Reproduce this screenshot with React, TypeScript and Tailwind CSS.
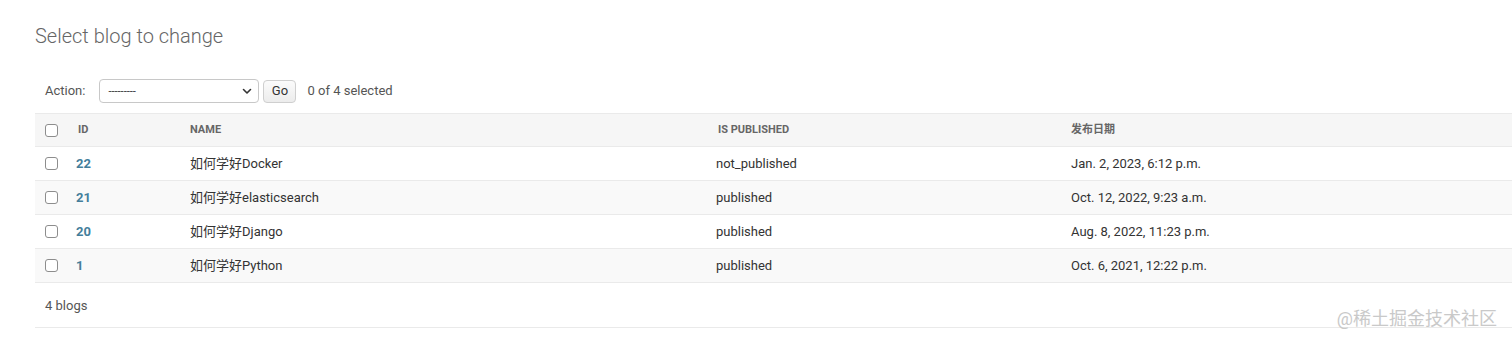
import React from 'react';

const rows = [
  { id: 22, name: '如何学好Docker', published: 'not_published', date: 'Jan. 2, 2023, 6:12 p.m.' },
  { id: 21, name: '如何学好elasticsearch', published: 'published', date: 'Oct. 12, 2022, 9:23 a.m.' },
  { id: 20, name: '如何学好Django', published: 'published', date: 'Aug. 8, 2022, 11:23 p.m.' },
  { id: 1, name: '如何学好Python', published: 'published', date: 'Oct. 6, 2021, 12:22 p.m.' },
];

const Checkbox = () => (
  <div className="w-[13px] h-[13px] rounded-[3px] border border-[#8d8d8d] bg-white" />
);

const cols = 'grid grid-cols-[33px_112px_526px_355px_1fr] items-center';

const App = () => {
  return (
    <div
      className="relative h-[343px] w-full overflow-hidden bg-white text-[#333]"
      style={{ fontFamily: 'Roboto, "Noto Sans CJK SC", sans-serif' }}
    >
      <div className="pl-[35px] pt-[24px]">
        {/* Title */}
        <h1 className="text-[20px] leading-[24px] font-light text-[#666]">Select blog to change</h1>

        {/* Actions */}
        <div className="mt-[31px] flex items-center pl-[10px] text-[13px]">
          <span className="text-[#555] mr-[14px]">Action:</span>
          <div className="flex h-[24px] w-[160px] items-center justify-between rounded-[4px] border border-[#c8c8c8] bg-white pl-[8px] pr-[6px]">
            <span className="text-[11px] leading-none text-[#333]">---------</span>
            <svg width="10" height="10" viewBox="0 0 10 10" fill="none">
              <path d="M1.5 3.5 L5 7 L8.5 3.5" stroke="#333" strokeWidth="1.6" strokeLinecap="round" strokeLinejoin="round" />
            </svg>
          </div>
          <div className="ml-[4px] flex h-[23px] w-[33px] items-center justify-center rounded-[4px] border border-[#cfcfcf] bg-gradient-to-b from-[#fbfbfb] to-[#ececec] text-[13px] text-[#333]">
            Go
          </div>
          <span className="ml-[11px] text-[#555]">0 of 4 selected</span>
        </div>

        {/* Table */}
        <div className="mt-[10px]">
          <div className={`${cols} h-[34px] border-y border-[#eaeaea] bg-[#f6f6f6] pt-[1px] text-[11px] font-bold uppercase text-[#666]`}>
            <div className="pl-[10px]"><Checkbox /></div>
            <div className="pl-[10px]">ID</div>
            <div className="pl-[10px]">Name</div>
            <div className="pl-[12px]">Is published</div>
            <div className="pl-[10px]">发布日期</div>
          </div>
          {rows.map((r, i) => (
            <div
              key={r.id}
              className={`${cols} h-[34px] border-b border-[#eaeaea] text-[13px] ${i % 2 === 1 ? 'bg-[#f9f9f9]' : 'bg-white'}`}
            >
              <div className="pl-[10px]"><Checkbox /></div>
              <div className="pl-[8px] font-bold text-[#447e9b]">{r.id}</div>
              <div className="pl-[10px]">{r.name}</div>
              <div className="pl-[10px]">{r.published}</div>
              <div className="pl-[10px]">{r.date}</div>
            </div>
          ))}
          <div className="flex h-[45px] items-center border-b border-[#eaeaea] pl-[10px] pt-[1px] text-[13px] text-[#555]">
            4 blogs
          </div>
        </div>
      </div>

      {/* Watermark */}
      <div className="absolute right-[15px] bottom-[15px] text-[18px] leading-none text-[#c9c9c9]">
        @稀土掘金技术社区
      </div>
    </div>
  );
};

export default App;
